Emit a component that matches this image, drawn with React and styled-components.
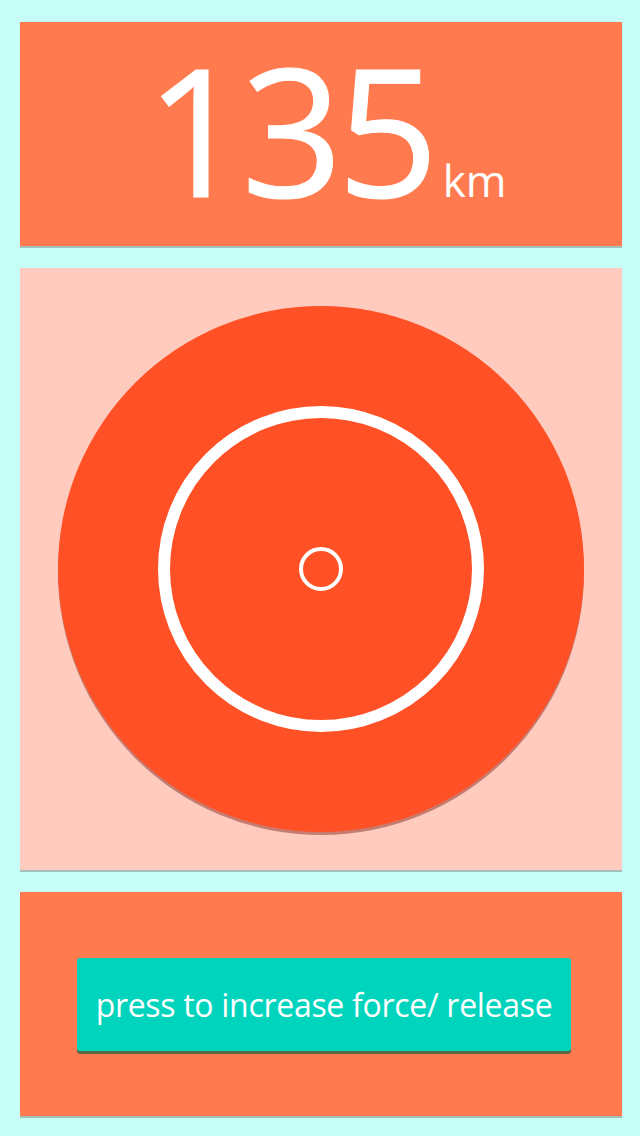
import React from "react";
import styled, { createGlobalStyle } from "styled-components";

const Global = createGlobalStyle`
  html, body { margin: 0; padding: 0; background: #c7fdf7; }
  body { font-family: "Open Sans", "Noto Sans", sans-serif; }
`;

const Page = styled.div`
  width: 640px;
  height: 1136px;
  box-sizing: border-box;
  padding: 22px 18px 20px 20px;
  background: #c7fdf7;
  display: flex;
  flex-direction: column;
  gap: 22px;
`;

const Panel = styled.section`
  width: 602px;
  height: ${(p) => p.$h}px;
  background: ${(p) => p.$bg};
  box-shadow: 0 2px 0 rgba(120, 120, 110, 0.45);
  display: flex;
  align-items: center;
  justify-content: center;
  flex-shrink: 0;
`;

const Distance = styled.div`
  display: flex;
  align-items: baseline;
  color: #fff;
  margin-left: 10px;
  margin-top: -12px;
`;

const Number = styled.span`
  font-size: 178px;
  font-weight: 400;
  letter-spacing: -6px;
  line-height: 1;
  -webkit-text-stroke: 1px #fff;
`;

const Unit = styled.span`
  font-size: 44px;
  margin-left: 10px;
  line-height: 1;
`;

const Target = styled.div`
  width: 526px;
  height: 526px;
  border-radius: 50%;
  background: #ff5026;
  box-shadow: 0 3px 0 rgba(150, 60, 50, 0.55);
  display: flex;
  align-items: center;
  justify-content: center;
`;

const Ring = styled.div`
  width: ${(p) => p.$size}px;
  height: ${(p) => p.$size}px;
  box-sizing: border-box;
  border-radius: 50%;
  border: ${(p) => p.$stroke}px solid #fff;
  display: flex;
  align-items: center;
  justify-content: center;
`;

const Button = styled.button`
  width: 494px;
  height: 93px;
  margin-left: 6px;
  border: none;
  border-radius: 3px;
  background: #00d4bd;
  box-shadow: 0 3px 0 #5b6a48;
  color: #fff;
  font-family: "Open Sans", sans-serif;
  font-size: 32px;
  letter-spacing: -0.3px;
  cursor: pointer;
  padding: 0;
`;

export default function App() {
  return (
    <>
      <Global />
      <Page>
        <Panel $h={224} $bg="#ff7b4f">
          <Distance>
            <Number>135</Number>
            <Unit>km</Unit>
          </Distance>
        </Panel>
        <Panel $h={602} $bg="#ffcbbe">
          <Target>
            <Ring $size={326} $stroke={12}>
              <Ring $size={44} $stroke={4} />
            </Ring>
          </Target>
        </Panel>
        <Panel $h={224} $bg="#ff7b4f">
          <Button>press to increase force/ release</Button>
        </Panel>
      </Page>
    </>
  );
}
